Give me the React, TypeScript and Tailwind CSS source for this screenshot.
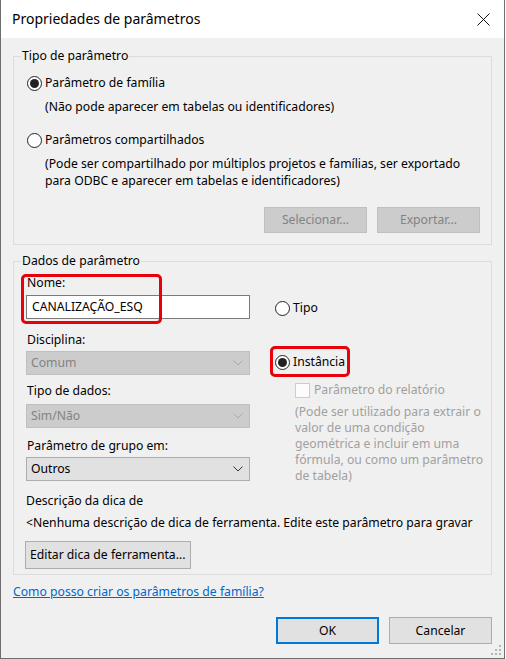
import React from "react";

const font = { fontFamily: '"Noto Sans", "Segoe UI", sans-serif' };

function Radio({ checked }: { checked?: boolean }) {
  return (
    <span className="flex h-[15px] w-[15px] shrink-0 items-center justify-center rounded-full border border-[#222222] bg-white">
      {checked && <span className="h-[9px] w-[9px] rounded-full bg-[#222222]" />}
    </span>
  );
}

function Chevron({ color }: { color: string }) {
  return (
    <svg width="10" height="6" viewBox="0 0 10 6" className="shrink-0">
      <path d="M0.5 0.5 L5 5 L9.5 0.5" fill="none" stroke={color} strokeWidth="1" />
    </svg>
  );
}

function Select({ value, disabled }: { value: string; disabled?: boolean }) {
  return (
    <div
      className={
        disabled
          ? "flex h-[24px] w-[224px] items-center justify-between border border-[#bfbfbf] bg-[#cccccc] pl-[4px] pr-[6px] text-[#838383]"
          : "flex h-[24px] w-[224px] items-center justify-between border border-[#adadad] bg-[#e1e1e1] pl-[4px] pr-[6px] text-black"
      }
    >
      <span>{value}</span>
      <Chevron color={disabled ? "#a8a8a8" : "#333333"} />
    </div>
  );
}

function Group({ title, children }: { title: string; children: React.ReactNode }) {
  return (
    <fieldset className="min-w-0 border border-[#dcdcdc]">
      <legend className="ml-[7px] px-[1px] leading-[16px]">{title}</legend>
      {children}
    </fieldset>
  );
}

export default function App() {
  return (
    <div className="h-[659px] w-[506px] text-[12.2px] leading-[16px] text-black" style={font}>
      <div className="relative flex h-[659px] w-[505px] flex-col border-x border-b border-[#6e6e6e] bg-[#f0f0f0]">
        {/* title bar */}
        <div className="flex h-[38px] shrink-0 items-center justify-between bg-white pl-[11px] pr-[14px]">
          <span className="text-[14px]">Propriedades de parâmetros</span>
          <svg width="13" height="13" viewBox="0 0 13 13">
            <path d="M0.5 0.5 L12.5 12.5 M12.5 0.5 L0.5 12.5" stroke="#111" strokeWidth="1" />
          </svg>
        </div>

        <div className="flex flex-1 flex-col px-[12px] pt-[10px]">
          <Group title="Tipo de parâmetro">
            <div className="flex flex-col pb-[11px] pl-[13px] pr-[11px] pt-[11px]">
              <label className="flex h-[16px] items-center gap-[3px]">
                <Radio checked />
                <span>Parâmetro de família</span>
              </label>
              <div className="mt-[8px] pl-[18px]">(Não pode aparecer em tabelas ou identificadores)</div>
              <label className="mt-[17px] flex h-[16px] items-center gap-[3px]">
                <Radio />
                <span>Parâmetros compartilhados</span>
              </label>
              <div className="mt-[7px] pl-[18px] leading-[17px]">
                <div>(Pode ser compartilhado por múltiplos projetos e famílias, ser exportado</div>
                <div>para ODBC e aparecer em tabelas e identificadores)</div>
              </div>
              <div className="mt-[18px] flex justify-end gap-[10px]">
                <button className="h-[26px] w-[103px] border border-[#bfbfbf] bg-[#cccccc] text-[#838383]">
                  Selecionar...
                </button>
                <button className="h-[26px] w-[103px] border border-[#bfbfbf] bg-[#cccccc] text-[#838383]">
                  Exportar...
                </button>
              </div>
            </div>
          </Group>

          <div className="mt-[8px]">
            <Group title="Dados de parâmetro">
              <div className="flex flex-col pb-[5px] pl-[11px] pr-[11px] pt-[6px]">
                <div className="flex">
                  <div className="flex w-[225px] shrink-0 flex-col pl-[1px]">
                    <div className="relative flex flex-col">
                      <div className="pl-[1px]">Nome:</div>
                      <div className="mt-[4px] flex h-[24px] w-[224px] items-center border border-[#7a7a7a] bg-white pl-[5px]">
                        CANALIZAÇÃO_ESQ
                      </div>
                      <div className="pointer-events-none absolute left-[-5px] top-[-1px] h-[50px] w-[141px] rounded-[5px] border-[3px] border-[#e8000b]" />
                    </div>
                    <div className="mt-[13px] pl-[1px]">Disciplina:</div>
                    <div className="mt-[3px]">
                      <Select value="Comum" disabled />
                    </div>
                    <div className="mt-[8px] pl-[1px]">Tipo de dados:</div>
                    <div className="mt-[5px]">
                      <Select value="Sim/Não" disabled />
                    </div>
                    <div className="mt-[10px] pl-[1px]">Parâmetro de grupo em:</div>
                    <div className="mt-[3px]">
                      <Select value="Outros" />
                    </div>
                  </div>

                  <div className="flex flex-col pl-[25px]">
                    <label className="mt-[25px] flex h-[16px] items-center gap-[3px]">
                      <Radio />
                      <span>Tipo</span>
                    </label>
                    <div className="relative mt-[38px] flex h-[16px] items-center gap-[3px]">
                      <Radio checked />
                      <span>Instância</span>
                      <div className="pointer-events-none absolute left-[-5px] top-[-8px] h-[31px] w-[80px] rounded-[5px] border-[3px] border-[#e8000b]" />
                    </div>
                    <div className="mt-[12px] flex h-[16px] items-center gap-[4px] pl-[20px] text-[#a0a0a0]">
                      <span className="h-[15px] w-[15px] shrink-0 border border-[#cccccc] bg-[#fcfcfc]" />
                      <span>Parâmetro do relatório</span>
                    </div>
                    <div className="mt-[6px] whitespace-nowrap pl-[20px] text-[#a0a0a0]">
                      <div>(Pode ser utilizado para extrair o</div>
                      <div>valor de uma condição</div>
                      <div>geométrica e incluir em uma</div>
                      <div>fórmula, ou como um parâmetro</div>
                      <div>de tabela)</div>
                    </div>
                  </div>
                </div>

                <div className="mt-[9px] pl-[1px]">Descrição da dica de</div>
                <div className="mt-[6px] whitespace-nowrap pl-[1px]">
                  &lt;Nenhuma descrição de dica de ferramenta. Edite este parâmetro para gravar
                </div>
                <button className="mt-[10px] h-[28px] w-[166px] border border-[#adadad] bg-[#e1e1e1] pl-[4px] text-left">
                  Editar dica de ferramenta...
                </button>
              </div>
            </Group>
          </div>

          <a href="#" className="mt-[9px] self-start text-[#0066cc] underline">
            Como posso criar os parâmetros de família?
          </a>

          <div className="mt-[17px] flex justify-end gap-[10px]">
            <button className="h-[27px] w-[103px] border-2 border-[#0078d7] bg-[#e1e1e1]">OK</button>
            <button className="h-[27px] w-[103px] border border-[#adadad] bg-[#e1e1e1]">Cancelar</button>
          </div>
        </div>

        {/* resize grip */}
        <svg width="11" height="11" viewBox="0 0 11 11" className="absolute bottom-[2px] right-[2px]">
          <rect x="8" y="0" width="2" height="2" fill="#b5b5b5" />
          <rect x="4" y="4" width="2" height="2" fill="#b5b5b5" />
          <rect x="8" y="4" width="2" height="2" fill="#b5b5b5" />
          <rect x="0" y="8" width="2" height="2" fill="#b5b5b5" />
          <rect x="4" y="8" width="2" height="2" fill="#b5b5b5" />
          <rect x="8" y="8" width="2" height="2" fill="#b5b5b5" />
        </svg>
      </div>
    </div>
  );
}
